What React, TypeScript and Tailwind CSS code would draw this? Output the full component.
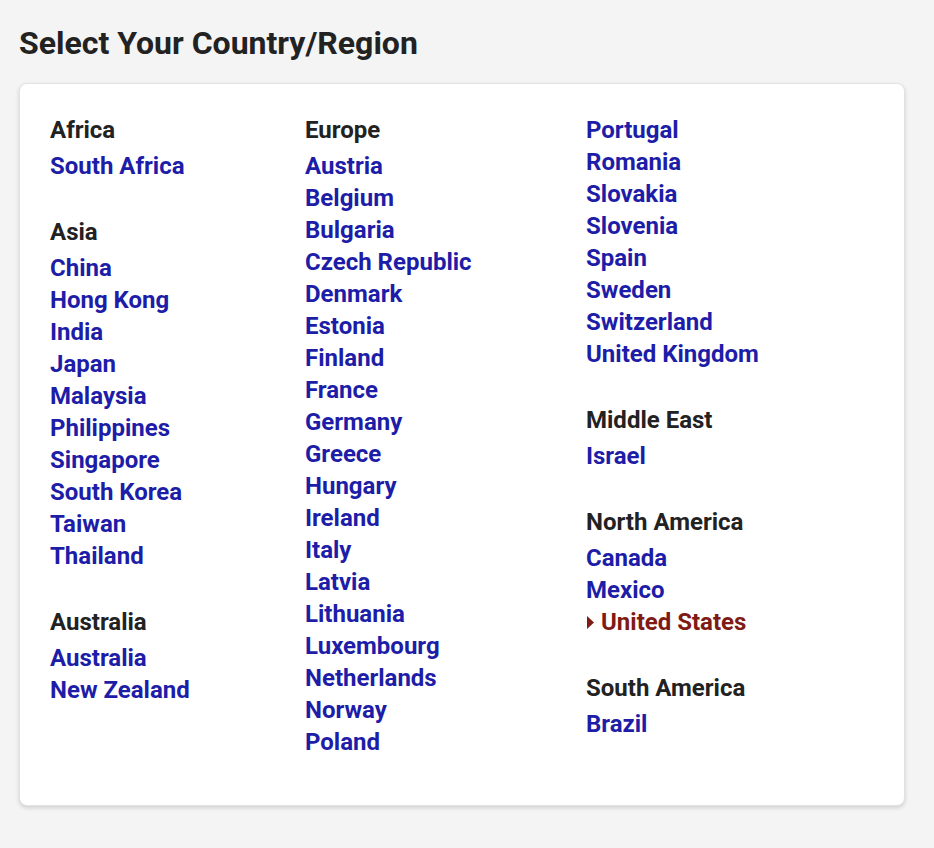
import React from "react";

type Section = { title?: string; items: string[]; current?: string };

// columns of the region picker, in reading order
const columns: { width: string; sections: Section[] }[] = [
  {
    width: "w-[255px]",
    sections: [
      { title: "Africa", items: ["South Africa"] },
      {
        title: "Asia",
        items: ["China", "Hong Kong", "India", "Japan", "Malaysia", "Philippines", "Singapore", "South Korea", "Taiwan", "Thailand"],
      },
      { title: "Australia", items: ["Australia", "New Zealand"] },
    ],
  },
  {
    width: "w-[281px]",
    sections: [
      {
        title: "Europe",
        items: [
          "Austria", "Belgium", "Bulgaria", "Czech Republic", "Denmark", "Estonia", "Finland", "France", "Germany",
          "Greece", "Hungary", "Ireland", "Italy", "Latvia", "Lithuania", "Luxembourg", "Netherlands", "Norway", "Poland",
        ],
      },
    ],
  },
  {
    width: "flex-1",
    sections: [
      { items: ["Portugal", "Romania", "Slovakia", "Slovenia", "Spain", "Sweden", "Switzerland", "United Kingdom"] },
      { title: "Middle East", items: ["Israel"] },
      { title: "North America", items: ["Canada", "Mexico", "United States"], current: "United States" },
      { title: "South America", items: ["Brazil"] },
    ],
  },
];

function RegionSection({ section }: { section: Section }) {
  return (
    <div className="mb-[34px]">
      {section.title && <h3 className="mb-1 text-[24px] leading-8 font-bold text-[#222222]">{section.title}</h3>}
      <ul>
        {section.items.map((item) =>
          item === section.current ? (
            <li key={item} className="flex items-center text-[24px] leading-8 font-bold text-[#801a14]">
              <svg width="8" height="13" viewBox="0 0 8 13" className="ml-[1px] mr-[6px]">
                <path d="M0 0 L7 6.5 L0 13 Z" fill="#801a14" />
              </svg>
              <a href="#">{item}</a>
            </li>
          ) : (
            <li key={item} className="text-[24px] leading-8 font-bold text-[#1d1da8]">
              <a href="#">{item}</a>
            </li>
          )
        )}
      </ul>
    </div>
  );
}

export default function App() {
  return (
    <div className="min-h-screen bg-[#f4f4f4] px-[19px] pt-[24px] pb-10 font-['Roboto','Liberation_Sans',sans-serif]">
      <h1 className="text-[32px] leading-[38px] font-bold text-[#222222]">Select Your Country/Region</h1>

      {/* Tarjeta con las columnas de regiones */}
      <div className="mt-[21px] w-[886px] rounded-lg border border-[#e2e2e2] bg-white pt-[30px] pb-[13px] pl-[30px] shadow-[0_2px_4px_rgba(0,0,0,0.15)]">
        <div className="flex">
          {columns.map((col, i) => (
            <div key={i} className={col.width}>
              {col.sections.map((s, j) => (
                <RegionSection key={j} section={s} />
              ))}
            </div>
          ))}
        </div>
      </div>
    </div>
  );
}
